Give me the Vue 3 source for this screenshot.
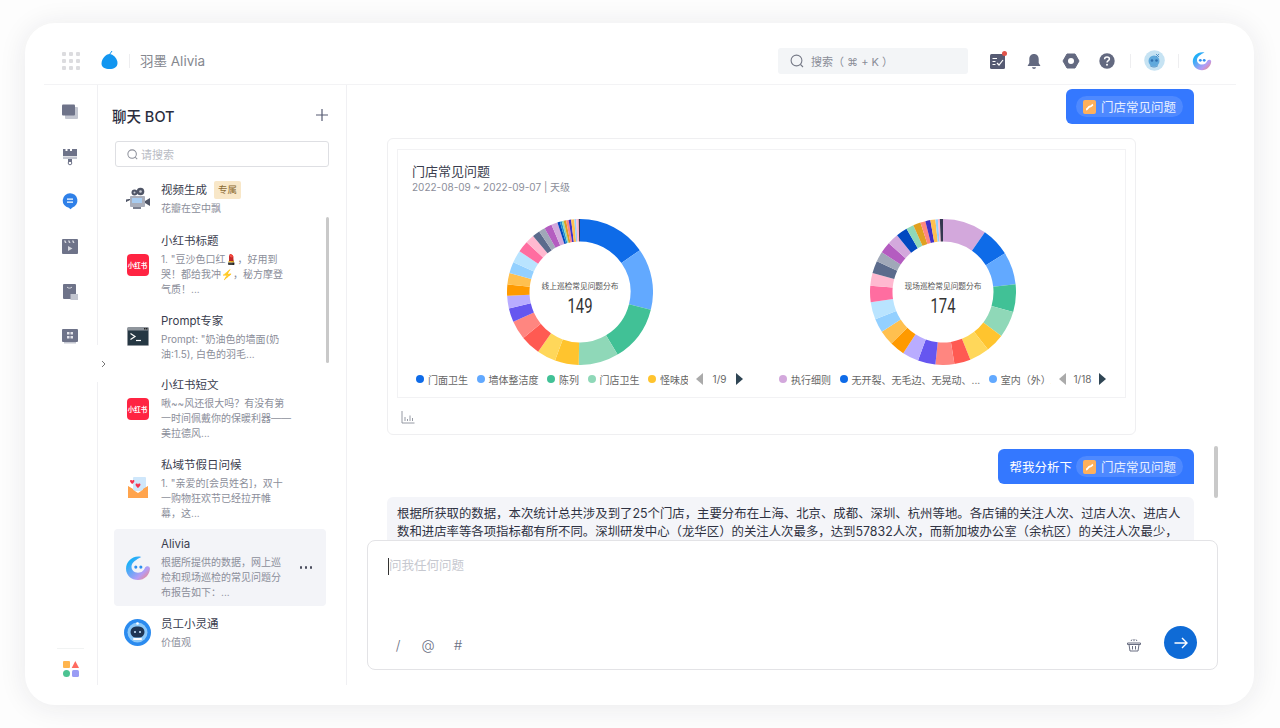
<script setup>
const tail1 = [['#d3a8dc',342],['#0048c0',344],['#1e90d0',345.5],['#8fd8b8',347],['#e0a020',349],['#ff8680',351],['#4030c8',353],['#ffc04f',355.5],['#93d0ff',357],['#ffb9d0',359],['#33384f',360]]
const stops1 = [['#0e6be8',55],['#62a9ff',104],['#41c196',149],['#8fd8b8',181],['#ffc42e',200],['#ffd75a',215],['#ff5a52',231],['#ff8680',246],['#6656f0',257],['#b9acff',267],['#ff9a00',276],['#ffc04f',285],['#93d0ff',294],['#b9e4ff',304],['#ff6da0',313],['#ffb9d0',320],['#5b6b8c',326],['#a0a8b8',331],['#b45cc0',337],...tail1]
const stops2 = [['#d3a8dc',35],['#0e6be8',58],['#62a9ff',84],['#41c196',106],['#8fd8b8',127],['#ffc42e',142],['#ffd75a',158],['#ff5a52',171],['#ff8680',186],['#6656f0',200],['#b9acff',213],['#ff9a00',225],['#ffc04f',237],['#93d0ff',248],['#b9e4ff',262],['#ff6da0',275],['#ffb9d0',285],['#5b6b8c',295],['#a0a8b8',303],['#b45cc0',312],['#d3a8dc',321],['#0048c0',330],['#8fd8b8',336],['#e0a020',342],['#ff8680',346],['#4030c8',350],['#ffc04f',354],['#93d0ff',356],['#ffb9d0',357.5],['#33384f',360]]

function pt(r, a) {
  const t = (a - 90) * Math.PI / 180
  return `${(73 + r * Math.cos(t)).toFixed(2)} ${(73 + r * Math.sin(t)).toFixed(2)}`
}
function arcs(stops) {
  let s = 0
  return stops.map(([c, e]) => {
    const l = e - s > 180 ? 1 : 0
    const d = `M${pt(73, s)}A73 73 0 ${l} 1 ${pt(73, e)}L${pt(50.5, e)}A50.5 50.5 0 ${l} 0 ${pt(50.5, s)}Z`
    s = e
    return { c, d }
  })
}
const charts = [
  { title: '线上巡检常见问题分布', value: '149', arcs: arcs(stops1), page: '1/9',
    legend: [['门面卫生','#0e6be8'],['墙体整洁度','#62a9ff'],['陈列','#41c196'],['门店卫生','#8fd8b8'],['怪味皮','#ffc42e']] },
  { title: '现场巡检常见问题分布', value: '174', arcs: arcs(stops2), page: '1/18',
    legend: [['执行细则','#d3a8dc'],['无开裂、无毛边、无晃动、...','#0e6be8'],['室内（外）工作','#62a9ff']] }
]
const items = [
  { icon: 'video', title: '视频生成', tag: '专属', lines: ['花瓣在空中飘'] },
  { icon: 'xhs', title: '小红书标题', lines: ['1. "豆沙色口红💄，好用到', '哭！都给我冲⚡，秘方摩登', '气质！...'] },
  { icon: 'term', title: 'Prompt专家', lines: ['Prompt: "奶油色的墙面(奶', '油:1.5), 白色的羽毛...'] },
  { icon: 'xhs', title: '小红书短文', lines: ['啾~~风还很大吗？有没有第', '一时间佩戴你的保暖利器——', '美拉德风...'] },
  { icon: 'mail', title: '私域节假日问候', lines: ['1. "亲爱的[会员姓名]，双十', '一购物狂欢节已经拉开帷', '幕，这...'] },
  { icon: 'alivia', title: 'Alivia', active: true, lines: ['根据所提供的数据，网上巡', '检和现场巡检的常见问题分', '布报告如下：...'] },
  { icon: 'robot', title: '员工小灵通', lines: ['价值观'] }
]
</script>

<template>
  <div class="page">
    <div class="card">
      <header class="top">
        <div class="grid-dots"><i v-for="n in 9" :key="n"></i></div>
        <svg class="logo" width="17" height="20" viewBox="0 0 17 20"><path d="M8.500 4C12 4 16.500 8.500 16.500 13C16.500 17 13 19 8.500 19C4 19 .5 17.500 .5 13.500C.5 9 5 4 8.500 4Z" fill="#1296f0"/><path d="M8.500 4.500L11 1" stroke="#1296f0" stroke-width="1" fill="none"/></svg>
        <span class="vsep vsep-a"></span>
        <span class="brand">羽墨 Alivia</span>
        <div class="top-search">
          <svg width="14" height="14" viewBox="0 0 14 14" fill="none" stroke="#777b88" stroke-width="1.100"><circle cx="6.500" cy="6.500" r="5.400"/><path d="M10.500 10.500L13 13"/></svg>
          <span>搜索（ ⌘ + K ）</span>
        </div>
        <div class="ticon ic1">
          <svg width="20" height="20" viewBox="0 0 20 20"><rect x="3" y="3" width="15" height="15" rx="1.500" fill="#565b73"/><path d="M5.500 7.500H10M5.500 10.500H8.500M5.500 13.500H8.500" stroke="#fff" stroke-width="1"/><path d="M10 12L12 14L16 9" stroke="#fff" stroke-width="1.200" fill="none"/><circle cx="17.500" cy="2.500" r="2.500" fill="#e0524a"/></svg>
        </div>
        <div class="ticon ic2">
          <svg width="20" height="20" viewBox="0 0 20 20"><path d="M10 3C7 3 5.300 5.300 5.300 8V12L3.500 15H16.500L14.700 12V8C14.700 5.300 13 3 10 3Z" fill="#636980"/><path d="M8 16.300H12C11.800 17.400 11 18 10 18C9 18 8.200 17.400 8 16.300Z" fill="#636980"/></svg>
        </div>
        <div class="ticon ic2">
          <svg width="20" height="20" viewBox="0 0 20 20"><path d="M6 3H14L18 10L14 17H6L2 10Z" fill="#636980" stroke="#636980" stroke-width="1" stroke-linejoin="round"/><circle cx="10" cy="10" r="3" fill="#fff"/></svg>
        </div>
        <div class="ticon ic3">
          <svg width="20" height="20" viewBox="0 0 20 20"><circle cx="10" cy="10" r="7.700" fill="#636980"/><path d="M7.600 8.200C7.600 6.800 8.700 6 10 6C11.300 6 12.400 6.800 12.400 8C12.400 9.600 10 9.600 10 11.400" stroke="#fff" stroke-width="1.500" fill="none"/><circle cx="10" cy="13.700" r="1" fill="#fff"/></svg>
        </div>
        <span class="vsep vsep-b"></span>
        <div class="ticon ic4">
          <svg width="21" height="21" viewBox="0 0 21 21"><circle cx="10.500" cy="10.500" r="10.300" fill="#c6e3f3"/><circle cx="10" cy="11" r="5.500" fill="#5fa9dc"/><circle cx="8" cy="10.500" r="1.300" fill="#2f6fae"/><circle cx="12.500" cy="10.500" r="1.300" fill="#2f6fae"/><path d="M12 4L15 7M15 4L12 7M6 15.500C8 17.500 12 17.500 14 15.500" stroke="#4a8dc4" stroke-width=".9" fill="none"/></svg>
        </div>
        <span class="vsep vsep-c"></span>
        <div class="ticon ic5">
          <svg width="20" height="20" viewBox="0 0 20 20"><defs><linearGradient id="ag" x1="0" y1="0" x2="1" y2="1"><stop offset=".2" stop-color="#1fb0f8"/><stop offset=".7" stop-color="#b59cf5"/><stop offset="1" stop-color="#ff8468"/></linearGradient></defs><path d="M12.500 1.500C6 0 .8 5 .8 10.500C.8 15.700 5 19.200 10 19.200C15 19.200 19 15.200 19.200 10.500C19.200 8.300 16.300 8 15.400 9.800C14.400 12 13 13.600 10 13.600C7 13.600 5 11.500 5 9C5 5.800 8.500 3.500 12.500 1.500Z" fill="url(#ag)"/><circle cx="8.300" cy="9.300" r="1.400" fill="#2f8ff0"/><circle cx="12.200" cy="9.300" r="1.400" fill="#2f8ff0"/></svg>
        </div>
      </header>

      <div class="body">
        <nav class="rail">
          <div class="rail-slot"><svg width="18" height="18" viewBox="0 0 18 18"><rect x="4" y="4" width="13" height="12" rx="1" fill="#c3c6d0"/><rect x="1" y="1.500" width="13" height="11" rx="1" fill="#6e7389"/></svg></div>
          <div class="rail-slot"><svg width="16" height="18" viewBox="0 0 16 18"><path d="M1 1H3.500V3H5.500V1H8V3H10V1H15V8H1Z" fill="#6e7389"/><rect x="1" y="8.500" width="14" height="2.500" fill="#c3c6d0"/><rect x="6" y="11" width="4" height="3" fill="#6e7389"/><circle cx="8" cy="15" r="1.800" fill="none" stroke="#6e7389"/></svg></div>
          <div class="rail-slot chat-slot"><svg width="18" height="18" viewBox="0 0 18 18"><path d="M9 1.200A7.300 7.300 0 0 1 11.500 15.400L9.500 17.200L7.800 15.700A7.300 7.300 0 0 1 9 1.200Z" fill="#2f80e8"/><path d="M6 7.200H12M6 10.200H12" stroke="#fff" stroke-width="1.300"/></svg></div>
          <div class="rail-slot"><svg width="16" height="15" viewBox="0 0 16 15"><rect width="16" height="15" rx="1" fill="#6e7389"/><path d="M2 1.500L3 4H4.500L3.500 1.500ZM6 1.500L7 4H8.500L7.500 1.500ZM10 1.500L11 4H12.500L11.500 1.500Z" fill="#d5d7de"/><path d="M6 7L10.500 9.500L6 12Z" fill="#d5d7de"/></svg></div>
          <div class="rail-slot"><svg width="15" height="16" viewBox="0 0 15 16"><rect width="13" height="15" rx="1" fill="#6e7389"/><path d="M4 3C5 4.500 8 4.500 9 3" stroke="#d5d7de" fill="none"/><rect x="7.500" y="10" width="7.500" height="6" fill="#c3c6d0"/></svg></div>
          <div class="rail-slot"><svg width="16" height="15" viewBox="0 0 16 15"><rect width="16" height="13" rx="1" fill="#6e7389"/><rect x="2" y="13" width="12" height="1.500" fill="#c3c6d0"/><g fill="#e3e4ea"><rect x="5" y="3" width="2.500" height="2.500"/><rect x="8.500" y="3" width="2.500" height="2.500"/><rect x="5" y="7" width="2.500" height="2.500"/><rect x="8.500" y="7" width="2.500" height="2.500"/></g></svg></div>
          <div class="rail-bottom"><svg width="16" height="16" viewBox="0 0 16 16"><rect width="7" height="7" rx="1" fill="#ffb54f"/><path d="M12.300 0L16 7H8.700Z" fill="#ff6b60"/><circle cx="3.500" cy="12.500" r="3.500" fill="#4cc392"/><rect x="9" y="9" width="7" height="7" rx="1.500" fill="#9a9cf5"/></svg></div>
        </nav>

        <aside class="list">
          <div class="list-head"><span>聊天 BOT</span>
            <svg width="12" height="12" viewBox="0 0 12 12"><path d="M6 0V12M0 6H12" stroke="#565b73" stroke-width="1.200"/></svg>
          </div>
          <div class="list-search">
            <svg width="11" height="11" viewBox="0 0 14 14" fill="none" stroke="#8b8e99" stroke-width="1.300"><circle cx="6.500" cy="6.500" r="5.400"/><path d="M10.500 10.500L13 13"/></svg>
            <span>请搜索</span>
          </div>
          <div class="items">
            <div v-for="it in items" :key="it.title + it.lines[0]" class="item" :class="{ active: it.active }">
              <div class="item-icon">
                <svg v-if="it.icon === 'video'" width="24" height="24" viewBox="0 0 24 24"><circle cx="8.500" cy="5.500" r="3" fill="#4f5566"/><circle cx="14.500" cy="4.500" r="3.800" fill="#4f5566"/><circle cx="14.500" cy="4.500" r="1.300" fill="#c9ccd5"/><circle cx="8.500" cy="5.500" r="1" fill="#c9ccd5"/><rect x="4" y="9" width="15" height="11" rx="1" fill="#a9aebb"/><rect x="6" y="11" width="10" height="5" fill="#a8ccf0"/><path d="M19 14L24 11V19L19 16Z" fill="#4f5566"/><path d="M4 12.500L0 14.500V13Z" fill="#4f5566" stroke="#4f5566"/><rect x="7" y="20" width="8" height="2" fill="#7a8090"/></svg>
                <div v-else-if="it.icon === 'xhs'" class="xhs">小红书</div>
                <svg v-else-if="it.icon === 'term'" width="22" height="19" viewBox="0 0 22 19"><rect width="22" height="19" rx="1.500" fill="#8f959c"/><rect x="1" y="3.500" width="20" height="14.500" fill="#253743"/><path d="M3.500 6.500L8 9.500L3.500 12.500" stroke="#fff" stroke-width="1.200" fill="none"/><path d="M9 13.500H14" stroke="#fff" stroke-width="1.200"/><rect x="17" y="1" width="1.500" height="1.500" fill="#222"/><rect x="19" y="1" width="1.500" height="1.500" fill="#222"/></svg>
                <svg v-else-if="it.icon === 'mail'" width="22" height="22" viewBox="0 0 22 22"><rect x="6" y="0" width="13" height="14" rx="1" fill="#cfe7fb"/><path d="M1 9L6 12V21H1Z" fill="#ff9e45"/><path d="M21 9L16 12V21H21Z" fill="#ff9e45"/><path d="M1 9.500L11 16L21 9.500V20C21 20.800 20.500 21 20 21H2C1.500 21 1 20.800 1 20Z" fill="#ffa44d"/><path d="M3 4C3 2.600 5 2.600 5.200 4C5.400 2.600 7.400 2.600 7.400 4C7.400 5.500 5.200 7 5.200 7C5.200 7 3 5.500 3 4Z" fill="#f5344f"/><path d="M8.500 7.500C8.500 6 10.800 6 11 7.500C11.200 6 13.500 6 13.500 7.500C13.500 9 11 11 11 11C11 11 8.500 9 8.500 7.500Z" fill="#f5344f"/></svg>
                <svg v-else-if="it.icon === 'alivia'" width="26" height="26" viewBox="0 0 20 20"><defs><linearGradient id="ag2" x1="0" y1="0" x2="1" y2="1"><stop offset=".2" stop-color="#1fb0f8"/><stop offset=".7" stop-color="#b59cf5"/><stop offset="1" stop-color="#ff8468"/></linearGradient></defs><path d="M12.500 1.500C6 0 .8 5 .8 10.500C.8 15.700 5 19.200 10 19.200C15 19.200 19 15.200 19.200 10.500C19.200 8.300 16.300 8 15.400 9.800C14.400 12 13 13.600 10 13.600C7 13.600 5 11.500 5 9C5 5.800 8.500 3.500 12.500 1.500Z" fill="url(#ag2)"/><circle cx="8.300" cy="9.300" r="1.200" fill="#2f8ff0"/><circle cx="12.200" cy="9.300" r="1.200" fill="#2f8ff0"/></svg>
                <svg v-else width="27" height="27" viewBox="0 0 27 27"><circle cx="13.500" cy="13.500" r="13.500" fill="#2b8bef"/><circle cx="13.500" cy="13.500" r="10" fill="#8cc8f8"/><circle cx="13.500" cy="4.500" r="1.300" fill="#fff"/><rect x="6.500" y="7.500" width="14" height="11" rx="5.500" fill="#1f3553"/><circle cx="11" cy="13" r="1" fill="#cfe8ff"/><circle cx="16" cy="13" r="1" fill="#cfe8ff"/><rect x="9" y="19" width="9" height="2" rx="1" fill="#fff"/></svg>
              </div>
              <div class="item-text">
                <div class="item-title">{{ it.title }}<span v-if="it.tag" class="tag">{{ it.tag }}</span></div>
                <div v-for="l in it.lines" :key="l" class="item-line">{{ l }}</div>
              </div>
              <div v-if="it.active" class="more"><i></i><i></i><i></i></div>
            </div>
          </div>
          <div class="list-bar"></div>
          <div class="collapse"><svg width="5" height="8" viewBox="0 0 5 8"><path d="M1 1L4 4L1 7" stroke="#777" fill="none"/></svg></div>
        </aside>

        <main class="main">
          <div class="msgs">
            <div class="bubble-row">
              <div class="bubble">
                <span class="chip"><svg class="doc" width="13" height="14" viewBox="0 0 13 14"><rect width="13" height="14" rx="2" fill="#ffb05c"/><path d="M3 9.500C5 9.500 5 6.500 7 6.500C8.500 6.500 9 5 10 4.500" stroke="#fff" stroke-width="1.800" fill="none"/></svg>门店常见问题</span>
              </div>
            </div>
            <section class="result">
              <div class="result-in">
                <div class="r-title">门店常见问题</div>
                <div class="r-date">2022-08-09 ~ 2022-09-07 | 天级</div>
                <div class="charts">
                  <div v-for="c in charts" :key="c.title" class="chart">
                    <svg class="donut" width="146" height="146" viewBox="0 0 146 146">
                      <path v-for="(a, i) in c.arcs" :key="i" :d="a.d" :fill="a.c" />
                      <text x="73" y="70" text-anchor="middle" class="d-label">{{ c.title }}</text>
                      <text x="73" y="94" text-anchor="middle" class="d-value" textLength="25" lengthAdjust="spacingAndGlyphs">{{ c.value }}</text>
                    </svg>
                    <div class="legend">
                      <div class="legend-items">
                        <span v-for="l in c.legend" :key="l[0]" class="lg"><i :style="{ background: l[1] }"></i>{{ l[0] }}</span>
                      </div>
                      <span class="tri tri-l"></span>
                      <span class="pg">{{ c.page }}</span>
                      <span class="tri tri-r"></span>
                    </div>
                  </div>
                </div>
              </div>
              <svg class="bar-ic" width="14" height="14" viewBox="0 0 14 14" fill="none" stroke="#8a8e9a" stroke-width=".9"><path d="M1 1V13H13.500"/><path d="M4 11V7M6.500 11V9M9 11V5.500M11.500 11V8"/></svg>
            </section>
            <div class="bubble-row second">
              <div class="bubble">
                <span class="ask">帮我分析下</span>
                <span class="chip"><svg class="doc" width="13" height="14" viewBox="0 0 13 14"><rect width="13" height="14" rx="2" fill="#ffb05c"/><path d="M3 9.500C5 9.500 5 6.500 7 6.500C8.500 6.500 9 5 10 4.500" stroke="#fff" stroke-width="1.800" fill="none"/></svg>门店常见问题</span>
              </div>
            </div>
            <div class="answer">
              根据所获取的数据，本次统计总共涉及到了25个门店，主要分布在上海、北京、成都、深圳、杭州等地。各店铺的关注人次、过店人次、进店人数和进店率等各项指标都有所不同。深圳研发中心（龙华区）的关注人次最多，达到57832人次，而新加坡办公室（余杭区）的关注人次最少，
            </div>
          </div>
          <div class="main-bar"></div>
          <div class="composer">
            <div class="ph"><span class="caret"></span>问我任何问题</div>
            <div class="tools">
              <span class="tool">/</span>
              <span class="tool">@</span>
              <span class="tool">#</span>
              <svg class="gift" width="14" height="14" viewBox="0 0 14 14" fill="none" stroke="#6a6f82" stroke-width="1"><path d="M.5 5H13.500V6.500H.5ZM2 6.500L3 13H11L12 6.500M5.500 8V11.500M8.500 8V11.500M4 3L5 1.500M7 3.200V1M10 3L9 1.500"/></svg>
              <button class="send" type="button"><svg width="14" height="12" viewBox="0 0 14 12" fill="none" stroke="#fff" stroke-width="1.400"><path d="M.5 6H13M8 1L13 6L8 11"/></svg></button>
            </div>
          </div>
        </main>
      </div>
    </div>
  </div>
</template>

<style>
html, body { margin: 0; background: #fff; }
</style>

<style scoped>
.page {
  width: 1280px; height: 728px; box-sizing: border-box; padding: 23px 26px 23px 25px;
  overflow: hidden; background: #fdfdfd;
  font-family: Inter, "Noto Sans CJK SC", sans-serif;
}
.card {
  height: 682px; background: #fff; border-radius: 30px; box-sizing: border-box;
  padding: 0 18px 20px 19px; display: flex; flex-direction: column;
  box-shadow: 0 2px 28px rgba(30, 35, 60, .09);
}
.top {
  height: 62px; flex: none; display: flex; align-items: center; box-sizing: border-box;
  padding: 14px 24px 0 18px; border-bottom: 1px solid #f3f3f5;
}
.grid-dots { display: grid; grid-template-columns: repeat(3, 4px); gap: 3px; width: 18px; }
.grid-dots i { width: 4px; height: 4px; background: #dcdcdf; border-radius: 1px; }
.logo { margin-left: 21px; margin-top: -1px; }
.vsep { width: 1px; height: 14px; background: #eeeef0; flex: none; }
.vsep-a { margin-left: 11px; }
.vsep-b { margin-left: 13px; }
.vsep-c { margin-left: 13px; }
.brand { margin-left: 10px; font-size: 13.5px; color: #85888f; font-weight: 400; position: relative; top: -1px; }
.top-search {
  margin-left: auto; width: 190px; height: 26px; background: #f3f5f7; border-radius: 3px;
  display: flex; align-items: center; box-sizing: border-box; padding-left: 12px; gap: 7px;
  font-size: 11px; color: #8a8d98;
}
.ticon { width: 20px; height: 20px; flex: none; display: flex; align-items: center; justify-content: center; }
.ic1 { margin-left: 19px; }
.ic2 { margin-left: 17px; }
.ic3 { margin-left: 16px; }
.ic4 { margin-left: 13px; width: 21px; }
.ic5 { margin-left: 13px; }

.body { flex: 1; min-height: 0; display: flex; }
.rail {
  width: 54px; flex: none; box-sizing: border-box; padding-top: 4px;
  display: flex; flex-direction: column; align-items: stretch; border-right: 1px solid #f0f0f3;
}
.rail-slot { height: 45px; display: flex; align-items: center; justify-content: center; padding-right: 1px; }
.chat-slot { margin-top: -1px; margin-bottom: 1px; }
.rail-bottom {
  margin: auto 13px 0 13px; height: 37px; border-top: 1px solid #f1f3f3;
  display: flex; align-items: center; justify-content: center; padding-top: 4px; box-sizing: border-box;
}
.list {
  width: 249px; flex: none; box-sizing: border-box; border-right: 1px solid #f0f0f3;
  position: relative; display: flex; flex-direction: column; min-height: 0;
}
.list-head {
  height: 20px; margin: 20px 18px 0 14px; display: flex; justify-content: space-between; align-items: center;
  font-size: 14.5px; font-weight: 500; color: #2a2d3e;
}
.list-search {
  margin: 16px 17px 0; height: 26px; border: 1px solid #dedfe3; border-radius: 3px; box-sizing: border-box;
  display: flex; align-items: center; gap: 3px; padding-left: 11px; font-size: 11px; color: #b9bcc4;
}
.items { margin: 8px 20px 0 16px; min-height: 0; overflow: hidden; display: flex; flex-direction: column; gap: 2.5px; height: 485px; flex: none; }
.item { display: flex; align-items: center; padding: 6px 14px 6px 0; border-radius: 4px; flex: none; }
.item:first-child { margin-bottom: 1.5px; }
.item.active { background: #f3f4f8; }
.item-icon { width: 47px; flex: none; display: flex; align-items: center; justify-content: center; }
.xhs {
  width: 22px; height: 22px; background: #ff2442; border-radius: 4px; color: #fff;
  font-size: 6.5px; font-weight: 700; display: flex; align-items: center; justify-content: center; white-space: nowrap;
}
.item-text { flex: 1; min-width: 0; }
.item-title { height: 18px; line-height: 18px; font-size: 11.5px; color: #3a3d4e; margin-bottom: 2px; display: flex; align-items: center; }
.tag {
  margin-left: 7px; background: #f8e7c8; color: #8a6a33; font-size: 9.5px; height: 18px; line-height: 18px;
  padding: 0 4px; border-radius: 2px;
}
.item-line { font-size: 10px; line-height: 15px; color: #8b8e9a; white-space: nowrap; }
.more { display: flex; gap: 2.5px; }
.more i { width: 2.5px; height: 2.5px; border-radius: 50%; background: #4a4d5e; }
.list-bar { position: absolute; left: 228px; top: 132px; width: 3px; height: 146px; border-radius: 2px; background: #c9c9c9; }
.collapse {
  position: absolute; left: -2px; top: 260px; width: 8px; height: 37px; background: #fff;
  display: flex; align-items: center; justify-content: center; padding-left: 3px;
}

.main { flex: 1; min-width: 0; position: relative; display: flex; flex-direction: column; }
.msgs { flex: 1; min-height: 0; overflow: hidden; padding: 4px 0 0 40px; box-sizing: border-box; }
.bubble-row { display: flex; justify-content: flex-end; width: 807px; }
.bubble {
  height: 35px; background: #3478ff; color: #fff; border-radius: 6px 6px 0 6px; box-sizing: border-box;
  padding: 0 11px 0 10px; display: flex; align-items: center; font-size: 12.5px; gap: 4px;
}
.second { margin-top: 14px; }
.second .bubble { padding-left: 11px; }
.chip {
  height: 21px; border-radius: 11px; background: rgba(255, 255, 255, .13); display: flex; align-items: center;
  padding: 0 7px; color: #e8efff;
}
.doc { margin-right: 5px; }
.result { width: 749px; height: 297px; margin-top: 14px; border: 1px solid #efeff1; border-radius: 6px; box-sizing: border-box; padding: 10px 9px; }
.result-in { height: 249px; border: 1px solid #f2f2f4; box-sizing: border-box; padding-top: 12px; }
.r-title { font-size: 13px; line-height: 18px; padding-left: 14px; color: #3a3d4e; }
.r-date { font-size: 10px; line-height: 14px; padding-left: 14px; color: #8b8e9a; }
.charts { display: flex; margin-top: 25px; }
.chart { width: 363px; flex: none; display: flex; flex-direction: column; align-items: center; }
.donut { display: block; }
.d-label { font-size: 7.7px; fill: #555; font-family: "Noto Sans CJK SC", sans-serif; }
.d-value { font-size: 20px; font-weight: 400; fill: #333; font-family: Roboto, sans-serif; }
.legend { align-self: stretch; margin-top: 7px; height: 14px; padding-left: 18px; display: flex; align-items: center; }
.legend-items { width: 272px; flex: none; overflow: hidden; display: flex; white-space: nowrap; }
.lg { display: flex; align-items: center; font-size: 10px; color: #666; margin-right: 8.5px; flex: none; }
.lg i { width: 8px; height: 8px; border-radius: 50%; margin-right: 4px; }
.tri { width: 0; height: 0; border-top: 6.5px solid transparent; border-bottom: 6.5px solid transparent; flex: none; }
.tri-l { margin-left: 8px; border-right: 7.5px solid #aaa; }
.tri-r { border-left: 7.5px solid #2f4554; }
.pg { font-size: 10px; color: #666; width: 33px; text-align: center; flex: none; }
.bar-ic { display: block; margin: 12px 0 0 4px; }
.answer {
  width: 807px; margin-top: 13px; box-sizing: border-box; padding: 8px 6px 7px 10px; background: #f4f5f9; border-radius: 6px;
  font-size: 12.4px; line-height: 18px; color: #2f3242; height: 60px;
}
.main-bar { position: absolute; left: 867px; top: 361px; width: 4px; height: 52px; border-radius: 2px; background: #c9c9c9; }
.composer {
  flex: none; height: 130px; margin: 0 18px 15px 20px; border: 1px solid #e3e3e6; border-radius: 8px; background: #fff;
  box-sizing: border-box; padding: 0 20px; display: flex; flex-direction: column; position: relative;
}
.ph { margin-top: 16px; height: 18px; line-height: 18px; font-size: 12.5px; color: #c6c8cf; display: flex; align-items: center; }
.caret { width: 1px; height: 17px; background: #333; }
.tools { margin-top: auto; margin-bottom: 10px; display: flex; align-items: center; height: 33px; color: #6a6f82; }
.tool { width: 30px; text-align: center; font-size: 13.5px; font-weight: 300; flex: none; margin-left: -5px; margin-right: 5px; position: relative; top: 2px; }
.gift { margin-left: auto; margin-right: 23px; position: relative; top: 2px; }
.send { width: 33px; height: 33px; border: none; padding: 0; border-radius: 50%; background: #0f6bd6; display: flex; align-items: center; justify-content: center; }
</style>
